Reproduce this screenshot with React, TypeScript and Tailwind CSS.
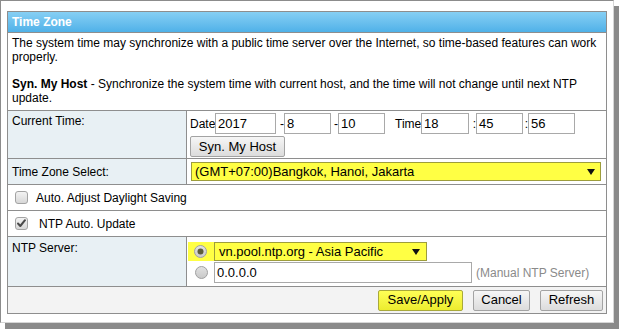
import React from "react";

const font = "font-['Liberation_Sans',Arial,sans-serif]";

function Checkbox({ checked }: { checked?: boolean }) {
  return (
    <svg width="13" height="13" viewBox="0 0 13 13" className="shrink-0">
      <defs>
        <linearGradient id={checked ? "cbg1" : "cbg0"} x1="0" y1="0" x2="0" y2="1">
          <stop offset="0" stopColor="#f4f4f4" />
          <stop offset="1" stopColor="#d6d6d6" />
        </linearGradient>
      </defs>
      <rect x="0.5" y="0.5" width="12" height="12" rx="2.5" fill={`url(#${checked ? "cbg1" : "cbg0"})`} stroke="#a3a3a3" />
      {checked && (
        <path d="M3 6.5 L5.3 9 L10 3.2" fill="none" stroke="#4a4a4a" strokeWidth="2" strokeLinecap="round" strokeLinejoin="round" />
      )}
    </svg>
  );
}

function Radio({ checked, id }: { checked?: boolean; id: string }) {
  return (
    <svg width="13" height="13" viewBox="0 0 13 13" className="shrink-0">
      <defs>
        <linearGradient id={id} x1="0" y1="0" x2="0" y2="1">
          <stop offset="0" stopColor="#e2e2e2" />
          <stop offset="1" stopColor="#c8c8c8" />
        </linearGradient>
      </defs>
      <circle cx="6.5" cy="6.5" r="6" fill={`url(#${id})`} stroke="#a0a0a0" />
      {checked && <circle cx="6.5" cy="6.5" r="3" fill="#5b5b3a" />}
    </svg>
  );
}

function Arrow() {
  return (
    <svg width="8" height="6" viewBox="0 0 8 6" className="shrink-0">
      <path d="M0 0 H8 L4 6 Z" fill="#111" />
    </svg>
  );
}

function TextBox({ value, w }: { value: string; w: string }) {
  return (
    <div className={`${w} shrink-0 h-[21px] border border-[#a9a9a9] bg-white pl-[2px] text-[13px] leading-[19px] text-black`}>
      {value}
    </div>
  );
}

function Btn({ children, w, yellow }: { children: React.ReactNode; w: string; yellow?: boolean }) {
  return (
    <div
      className={`${w} h-[21px] flex items-center justify-center rounded-[2px] border text-[13px] font-normal text-black ${
        yellow
          ? "border-[#a9a93a] bg-gradient-to-b from-[#ffff55] to-[#ecec2e]"
          : "border-[#a3a3a3] bg-gradient-to-b from-[#f6f6f6] to-[#dcdcdc]"
      }`}
    >
      {children}
    </div>
  );
}

export default function App() {
  return (
    <div className={`w-[619px] h-[329px] bg-white overflow-hidden ${font}`}>
      <div className="w-[614px] h-[323px] border-l border-t border-[#8c8c8c] border-r border-b border-r-[#d6d6d6] border-b-[#d6d6d6] shadow-[5px_6px_0_#8a8a8a] pl-[6px] pt-[10px]">
        <div className="w-[600px] border border-[#8e8e8e] text-[12px] leading-[14px] text-black">
          {/* header */}
          <div className="h-[21px] border-b border-[#8e8e8e] bg-gradient-to-b from-[#86cff4] to-[#4fb1e8] pl-[4px] flex items-center">
            <span className="font-bold text-white text-[12px]">Time Zone</span>
          </div>
          {/* description */}
          <div className="h-[78px] border-b border-[#8e8e8e] px-[4px] pt-[3px]">
            <p>
              The system time may synchronize with a public time server over the Internet, so time-based features can work
              properly.
            </p>
            <p className="mt-[13px]">
              <b>Syn. My Host</b> - Synchronize the system time with current host, and the time will not change until next NTP
              update.
            </p>
          </div>
          {/* current time */}
          <div className="flex h-[48px] border-b border-[#8e8e8e]">
            <div className="w-[179px] border-r border-[#8e8e8e] bg-[#e8f0f4] pl-[4px] pt-[3px]">Current Time:</div>
            <div className="flex-1 pl-[3px] pt-[2px]">
              <div className="flex items-center whitespace-nowrap">
                <span className="w-[25px] shrink-0">Date</span>
                <TextBox value="2017" w="w-[61px]" />
                <span className="w-[8px] shrink-0 flex justify-end">-</span>
                <TextBox value="8" w="w-[47px]" />
                <span className="w-[7px] shrink-0 flex justify-end">-</span>
                <TextBox value="10" w="w-[47px]" />
                <span className="w-[10px] shrink-0" />
                <span className="w-[26px] shrink-0">Time</span>
                <TextBox value="18" w="w-[48px]" />
                <span className="w-[7px] shrink-0 flex justify-end">:</span>
                <TextBox value="45" w="w-[47px]" />
                <span className="w-[5px] shrink-0 flex justify-end">:</span>
                <TextBox value="56" w="w-[47px]" />
              </div>
              <div className="mt-[2px]">
                <Btn w="w-[95px]">Syn. My Host</Btn>
              </div>
            </div>
          </div>
          {/* time zone select */}
          <div className="flex h-[26px] border-b border-[#8e8e8e]">
            <div className="w-[179px] border-r border-[#8e8e8e] bg-[#e8f0f4] pl-[4px] flex items-center">Time Zone Select:</div>
            <div className="flex-1 pl-[4px] flex items-center">
              <div className="w-[410px] h-[19px] border border-[#9d9d3c] bg-[#ffff44] flex items-center justify-between pl-[3px] pr-[5px] text-[13px]">
                <span>(GMT+07:00)Bangkok, Hanoi, Jakarta</span>
                <Arrow />
              </div>
            </div>
          </div>
          {/* auto adjust */}
          <div className="flex h-[26px] border-b border-[#8e8e8e] items-center pl-[7px]">
            <Checkbox />
            <span className="ml-[8px]">Auto. Adjust Daylight Saving</span>
          </div>
          {/* ntp auto update */}
          <div className="flex h-[26px] border-b border-[#8e8e8e] items-center pl-[7px]">
            <Checkbox checked />
            <span className="ml-[11px]">NTP Auto. Update</span>
          </div>
          {/* ntp server */}
          <div className="flex h-[50px] border-b border-[#8e8e8e]">
            <div className="w-[179px] border-r border-[#8e8e8e] bg-[#e8f0f4] pl-[4px] pt-[4px]">NTP Server:</div>
            <div className="flex-1 pt-[5px]">
              <div className="ml-[1px] w-[239px] h-[19px] bg-[#ffff44] flex items-center pl-[6px]">
                <Radio checked id="r1" />
                <div className="ml-[7px] w-[213px] h-[19px] border border-[#9d9d3c] bg-[#ffff44] flex items-center justify-between pl-[4px] pr-[6px] text-[13px]">
                  <span>vn.pool.ntp.org - Asia Pacific</span>
                  <Arrow />
                </div>
              </div>
              <div className="flex items-center mt-[1px] pl-[8px]">
                <Radio id="r2" />
                <span className="w-[6px]" />
                <TextBox value="0.0.0.0" w="w-[258px]" />
                <span className="ml-[4px] text-[#8a8a8a]">(Manual NTP Server)</span>
              </div>
            </div>
          </div>
          {/* buttons */}
          <div className="h-[26px] bg-[#f3f3f3] flex items-center justify-end gap-[10px] pr-[3px]">
            <Btn w="w-[85px]" yellow>
              Save/Apply
            </Btn>
            <Btn w="w-[57px]">Cancel</Btn>
            <Btn w="w-[63px]">Refresh</Btn>
          </div>
        </div>
      </div>
    </div>
  );
}
